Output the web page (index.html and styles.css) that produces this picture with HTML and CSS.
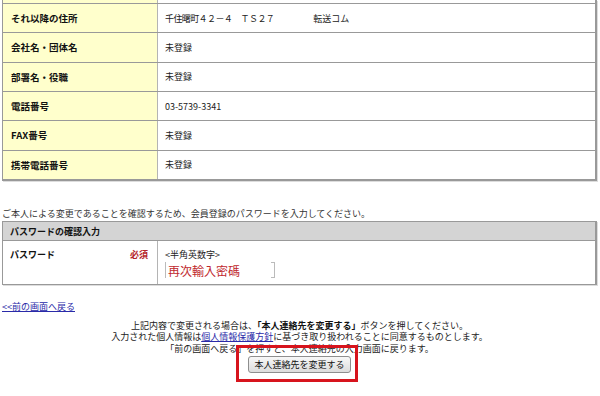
FILE: index.html
```html
<!DOCTYPE html>
<html lang="ja">

<head>
    <meta charset="UTF-8">
    <meta name="viewport" content="width=device-width, initial-scale=1.0">
    <title>本人連絡先の確認</title>
    <link rel="stylesheet" href="styles.css">
</head>

<body>
    <div class="page">
        <!-- registered contact details -->
        <div class="info">
            <div class="row cut">
                <div class="label"></div>
                <div class="value"></div>
            </div>
            <div class="row">
                <div class="label">それ以降の住所</div>
                <div class="value"><span class="addr">千住曙町４２－４　ＴＳ２７</span><span class="extra">転送コム</span></div>
            </div>
            <div class="row">
                <div class="label">会社名・団体名</div>
                <div class="value">未登録</div>
            </div>
            <div class="row">
                <div class="label">部署名・役職</div>
                <div class="value">未登録</div>
            </div>
            <div class="row">
                <div class="label">電話番号</div>
                <div class="value">03-5739-3341</div>
            </div>
            <div class="row">
                <div class="label">FAX番号</div>
                <div class="value">未登録</div>
            </div>
            <div class="row">
                <div class="label">携帯電話番号</div>
                <div class="value">未登録</div>
            </div>
        </div>

        <p class="note">ご本人による変更であることを確認するため、会員登録のパスワードを入力してください。</p>

        <div class="pw">
            <div class="pw-head">パスワードの確認入力</div>
            <div class="pw-row">
                <div class="pw-label">
                    <span>パスワード</span>
                    <span class="req">必須</span>
                </div>
                <div class="pw-field">
                    <div class="hint">&lt;半角英数字&gt;</div>
                    <div class="input"><span class="memo">再次輸入密碼</span></div>
                </div>
            </div>
        </div>

        <p class="back"><a href="#">&lt;&lt;前の画面へ戻る</a></p>

        <div class="confirm">
            <p>上記内容で変更される場合は、<b>「本人連絡先を変更する」</b>ボタンを押してください。<br>
                入力された個人情報は<a href="#">個人情報保護方針</a>に基づき取り扱われることに同意するものとします。<br>
                「前の画面へ戻る」を押すと、本人連絡先の入力画面に戻ります。</p>
            <div class="submit">
                <button type="button">本人連絡先を変更する</button>
                <span class="mark"></span>
            </div>
        </div>
    </div>
</body>

</html>
```

FILE: styles.css
```css
body {
    margin: 0;
    font-family: "Noto Sans CJK JP", "Noto Sans", sans-serif;
    font-size: 9px;
    color: #222;
    background: #fff;
}

p {
    margin: 0;
}

a {
    color: #2a2aa8;
}

.page {
    padding: 0 3px 24px 2px;
}

/* contact details table */
.info {
    border: 1px solid #999;
    border-top: 0;
    border-right-width: 2px;
    box-shadow: 1px 1px 0 #ddd;
}

.row {
    display: flex;
    height: 29.33px;
    box-sizing: border-box;
    border-bottom: 1px solid #999;
}

.row.cut {
    height: 4px;
}

.label {
    width: 155px;
    flex: none;
    box-sizing: border-box;
    display: flex;
    align-items: center;
    padding-left: 8px;
    background: #ffffcc;
    border-right: 1px solid #b4b4b4;
    font-weight: bold;
    font-size: 9.5px;
    color: #111;
}

.value {
    flex: 1;
    display: flex;
    align-items: center;
    padding-left: 7px;
}

.addr {
    letter-spacing: -0.6px;
}

.extra {
    margin-left: 39px;
}

.note {
    margin: 27px 0 1px;
    line-height: 12px;
    color: #333;
}

/* password block */
.pw {
    border: 1px solid #999;
    border-right-width: 2px;
    box-shadow: 1px 1px 0 #ddd;
}

.pw-head {
    height: 19px;
    line-height: 19px;
    box-sizing: border-box;
    padding-left: 7px;
    background: #d4d4d4;
    border-bottom: 1px solid #999;
    font-weight: bold;
    color: #111;
}

.pw-row {
    display: flex;
    height: 43px;
}

.pw-label {
    width: 155px;
    flex: none;
    box-sizing: border-box;
    display: flex;
    justify-content: space-between;
    padding: 8px 9px 0 7px;
    line-height: 12px;
    border-right: 1px solid #b4b4b4;
    font-weight: bold;
    color: #111;
}

.req {
    color: #b5232a;
}

.pw-field {
    padding: 8px 0 0 7px;
    line-height: 12px;
}

.input {
    position: relative;
    width: 110px;
    height: 16px;
    margin-top: 1px;
    box-sizing: border-box;
    border: 1px solid #bbb;
}

.memo {
    position: absolute;
    left: 0;
    top: -1px;
    bottom: -1px;
    width: 103px;
    padding-left: 2px;
    background: #fff;
    color: #c0272d;
    font-size: 12px;
    line-height: 17px;
}

.back {
    margin-top: 16px;
    line-height: 12px;
}

/* confirmation */
.confirm {
    margin-top: 7px;
    text-align: center;
    line-height: 11.5px;
    color: #222;
}

.confirm b {
    color: #111;
}

.submit {
    position: relative;
    display: inline-flex;
    margin-top: 2px;
}

.submit button {
    height: 17px;
    padding: 0 5px;
    font-family: inherit;
    font-size: 9px;
    color: #111;
    background: linear-gradient(#f8f8f8, #dcdcdc);
    border: 1px solid #8e8e8e;
    border-radius: 3px;
}

.mark {
    position: absolute;
    left: -12px;
    top: -11px;
    width: 122px;
    height: 37px;
    box-sizing: border-box;
    border: 3px solid #d7141d;
}
```
